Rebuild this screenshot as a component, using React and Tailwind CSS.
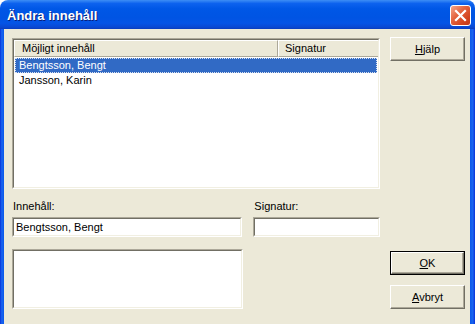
import React from "react";

const font = { fontFamily: '"Liberation Sans", Arial, sans-serif' };

function Btn({ children, def = false, className = "" }) {
  return (
    <div
      className={
        "w-[75px] h-[24px] flex items-center justify-center text-[11px] text-black " +
        (def ? "border border-black " : "") +
        className
      }
    >
      <div className="w-full h-full flex items-center justify-center bg-[#ECE9D8] border border-t-white border-l-white border-r-[#716F64] border-b-[#716F64] shadow-[inset_-1px_-1px_0_#ACA899]">
        {children}
      </div>
    </div>
  );
}

function Sunken({ className = "", children }) {
  return (
    <div className={"border border-t-[#ACA899] border-l-[#ACA899] border-r-white border-b-white " + className}>
      <div className="w-full h-full border border-t-[#716F64] border-l-[#716F64] border-r-[#F1EFE2] border-b-[#F1EFE2] bg-white overflow-hidden">
        {children}
      </div>
    </div>
  );
}

export default function App() {
  return (
    <div className="w-[475px] h-[324px] bg-white overflow-hidden" style={font}>
      <div className="w-full h-full flex flex-col rounded-t-[8px] overflow-hidden">
        {/* Title bar */}
        <div className="h-[29px] shrink-0 flex items-center justify-between pl-[7px] pr-[4px] bg-[linear-gradient(to_bottom,#3d8ef5_0%,#0d62ee_12%,#0057e6_30%,#0054e3_60%,#0554e6_80%,#0a48d2_94%,#0a3cbd_100%)]">
          <span
            className="text-white font-bold text-[13px] leading-none mt-[2px]"
            style={{ textShadow: "1px 1px 0 #0a1f7a" }}
          >
            Ändra innehåll
          </span>
          <div className="w-[21px] h-[21px] mt-[2px] rounded-[3px] border border-white flex items-center justify-center bg-[linear-gradient(135deg,#f5a68c_0%,#e4643f_40%,#d3441f_75%,#c2391a_100%)]">
            <svg width="13" height="13" viewBox="0 0 13 13">
              <path d="M2 2 L11 11 M11 2 L2 11" stroke="white" strokeWidth="2.2" strokeLinecap="square" />
            </svg>
          </div>
        </div>
        {/* Body with side borders */}
        <div className="flex-1 flex">
          <div className="w-[4px] bg-[linear-gradient(to_right,#0831d9,#1a66f0_45%,#0a58ea)]" />
          <div className="flex-1 bg-[#ECE9D8] flex pl-[8px] pt-[8px]">
            {/* Left column */}
            <div className="w-[368px] flex flex-col">
              <Sunken className="h-[151px] mt-[1px]">
                <div className="flex h-[17px] bg-[#ECE9D8] text-[11px] text-black">
                  <div className="w-[264px] h-full flex items-center pl-[7px] border-t border-l border-t-white border-l-white border-b border-b-[#ACA899] border-r border-r-[#ACA899]">
                    Möjligt innehåll
                  </div>
                  <div className="flex-1 h-full flex items-center pl-[6px] border-t border-l border-t-white border-l-white border-b border-b-[#ACA899]">
                    Signatur
                  </div>
                </div>
                <div className="pt-[1px] text-[11px]">
                  <div className="h-[15px] mx-[1px] flex items-center pl-[4px] bg-[#316AC5] text-white outline outline-1 outline-dotted outline-[#d8e0ee] -outline-offset-1">
                    Bengtsson, Bengt
                  </div>
                  <div className="h-[15px] mx-[1px] flex items-center pl-[4px] text-black">Jansson, Karin</div>
                </div>
              </Sunken>
              <div className="flex mt-[11px] text-[11px] text-black">
                <div className="w-[231px] flex flex-col">
                  <div className="h-[13px] leading-[13px] pl-[1px]">Innehåll:</div>
                  <Sunken className="h-[20px] mt-[4px]">
                    <div className="h-full flex items-center pl-[2px]">Bengtsson, Bengt</div>
                  </Sunken>
                </div>
                <div className="w-[127px] ml-[11px] flex flex-col">
                  <div className="h-[13px] leading-[13px] pl-[1px]">Signatur:</div>
                  <Sunken className="h-[20px] mt-[4px]" />
                </div>
              </div>
              <Sunken className="w-[231px] h-[60px] mt-[12px]" />
            </div>
            {/* Right column */}
            <div className="ml-[10px] flex flex-col">
              <Btn>
                <span><u>H</u>jälp</span>
              </Btn>
              <Btn def className="mt-[190px]">
                <span><u>O</u>K</span>
              </Btn>
              <Btn className="mt-[10px]">
                <span><u>A</u>vbryt</span>
              </Btn>
            </div>
          </div>
          <div className="w-[5px] bg-[linear-gradient(to_left,#0831d9,#1a66f0_45%,#0a58ea)]" />
        </div>
      </div>
    </div>
  );
}
